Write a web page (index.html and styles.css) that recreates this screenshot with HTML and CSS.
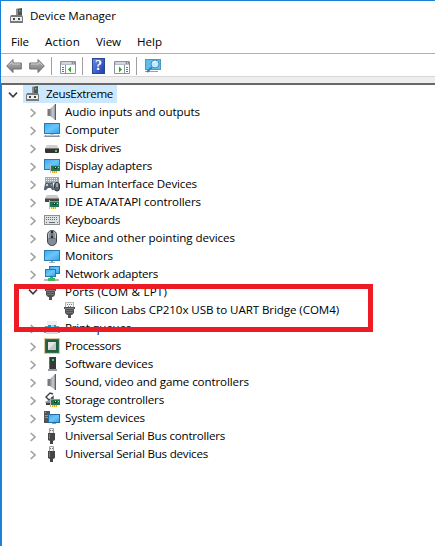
FILE: index.html
```html
<!DOCTYPE html>
<html lang="en">
<head>
<meta charset="utf-8">
<title>Device Manager</title>
<link rel="stylesheet" href="styles.css">
</head>
<body>
<svg class="defs" aria-hidden="true">
  <defs>
    <linearGradient id="blue" x1="0" y1="0" x2="1" y2="1"><stop offset="0" stop-color="#3eacf0"/><stop offset=".5" stop-color="#6cc5fb"/><stop offset="1" stop-color="#32a5ee"/></linearGradient>
    <linearGradient id="metal" x1="0" y1="0" x2="1" y2="0"><stop offset="0" stop-color="#8b8d90"/><stop offset=".5" stop-color="#c9ccd0"/><stop offset="1" stop-color="#74777b"/></linearGradient>
    <linearGradient id="arrow" x1="0" y1="0" x2="0" y2="1"><stop offset="0" stop-color="#b7b7b7"/><stop offset="1" stop-color="#777"/></linearGradient>
    <symbol id="closed" viewBox="0 0 8 10"><path d="M1.7 1 6 5 1.7 9" fill="none" stroke="#a3a3a3" stroke-width="1.7"/></symbol>
    <symbol id="open" viewBox="0 0 10 8"><path d="M1 1.7 5 5.8 9 1.7" fill="none" stroke="#404040" stroke-width="1.7"/></symbol>
    <symbol id="root" viewBox="0 0 16 16"><path d="M7 1 13 0v8H7z" fill="#505255"/><path d="M7 1 9 .6V8H7z" fill="#8d8f92"/><path d="M10 2h1.4v1.5H10z" fill="#28ef42"/><path d="M2 7h11l1 2v6H1V9z" fill="#77797c"/><path d="M2 9h11v4H2z" fill="#eee"/><path d="M4 10h2v2H4zm5 0h2v2H9z" fill="#444"/></symbol>
    <symbol id="speaker" viewBox="0 0 16 16"><path d="M3 5h3v7H3z" fill="#727981"/><path d="M3 5h1v7H3z" fill="#b6bcc2"/><path d="M6 5 11 0h1v16h-1l-5-4z" fill="url(#metal)"/><path d="M11 0h1v16h-1z" fill="#5a6068"/></symbol>
    <symbol id="computer" viewBox="0 0 16 16"><path d="M0 1h16v11H0z" fill="#287aaf"/><path d="M1 2h14v9H1z" fill="url(#blue)"/><path d="M6 12h4v1H6z" fill="#c4cbd0"/><path d="M1 13h14l1 2H0z" fill="#83939e"/><path d="M2 13h12v1H2z" fill="#bac7cf"/></symbol>
    <symbol id="monitor" viewBox="0 0 16 16"><path d="M0 2h16v11H0z" fill="#287aaf"/><path d="M1 3h14v9H1z" fill="url(#blue)"/><path d="M7 13h2v1H7z" fill="#8c9ba5"/><path d="M5 14h6v1H5z" fill="#a4afb6"/></symbol>
    <symbol id="disk" viewBox="0 0 16 16"><path d="M3 5h10l2 4H1z" fill="#cfd0d1"/><path d="M1 8h14v4q0 1-1 1H2q-1 0-1-1z" fill="#343434"/><path d="M1 8h14v1H1z" fill="#777"/><path d="M11 10h2v2h-2z" fill="#35e14c"/></symbol>
    <symbol id="card" viewBox="0 0 10 9"><path d="M0 0h1v9H0z" fill="#b7babd"/><path d="M1 1h9v6H1z" fill="#207652"/><path d="M1 1h9v1H1z" fill="#68a98a"/><path d="M4 3h3v2H4z" fill="#15432f"/><path d="M5 3h1v1H5zM8 3h1v1H8z" fill="#b8dfc7"/><path d="M2 7h5v2H2z" fill="#f4a800"/><path d="M3 7h1v2H3zm2 0h1v2H5z" fill="#ffd85b"/></symbol>
    <symbol id="display" viewBox="0 0 16 16"><path d="M0 1h16v11H0z" fill="#287aaf"/><path d="M1 2h14v9H1z" fill="url(#blue)"/><use href="#card" x="6" y="6" width="10" height="9"/></symbol>
    <symbol id="keyboard" viewBox="0 0 16 16"><path d="M0 3h16v10H0z" fill="#8a9095"/><path d="M1 4h14v8H1z" fill="#dfe2e4"/><path d="M2 5.5h12M2 7.5h12" stroke="#666b70" stroke-dasharray="1 1"/><path d="M2 10h1v1H2zm3 0h6v1H5zm8 0h1v1h-1z" fill="#666b70"/></symbol>
    <symbol id="hid" viewBox="0 0 16 16"><path d="M1 1h14v6H1z" fill="#a4a9ad"/><path d="M2 2.5h12M2 4.5h12" stroke="#f2f3f4" stroke-dasharray="1 1"/><path d="M1 8q1-3 3-1h2q3-2 3 1l1 5q0 2-2 1L7 12H4l-2 2q-2 1-2-1z" fill="#53626e"/><path d="M2 9h2M3 8v2" stroke="#e9edf0"/><circle cx="7.5" cy="9" r="1" fill="#5cacdf"/><rect x="10.5" y="6.5" width="5" height="8.5" rx="2.5" fill="#59616b" stroke="#30363d"/><path d="M13 7v4" stroke="#dce0e4"/></symbol>
    <symbol id="ide" viewBox="0 0 16 16"><path d="M3 1h10l2 3H1z" fill="#cacbcc"/><path d="M1 4h14v4H1z" fill="#474747"/><path d="M1 4h14v1H1z" fill="#888"/><use href="#card" x="5" y="6" width="10" height="9"/></symbol>
    <symbol id="mouse" viewBox="0 0 16 16"><rect x="3.5" y=".5" width="9" height="15" rx="4.3" fill="#858c95" stroke="#3e434a"/><path d="M6 1.5Q4 3 4.5 8M10 1.5Q12 3 11.5 8" stroke="#bcc1c6" fill="none"/><path d="M7 1h2v7H7z" fill="#25282d"/><path d="M7.5 3h1v3h-1z" fill="#a5b2be"/><path d="M5 8.5h6" stroke="#686e76"/></symbol>
    <symbol id="network" viewBox="0 0 16 16"><path d="M5 0h11v8H5z" fill="#257bae"/><path d="M6 1h9v6H6z" fill="url(#blue)"/><path d="M1 3h11v8H1z" fill="#257bae"/><path d="M2 4h9v6H2z" fill="url(#blue)"/><path d="M6 11h3v2H6z" fill="#58a766"/><path d="M0 13h15v2H0z" fill="#b6b9bb"/><path d="M4 12h7v3H4z" fill="#3eb95c"/></symbol>
    <symbol id="port" viewBox="0 0 16 16"><path d="M3.5.5h8v5h-8z" fill="#f2f2f2" stroke="#b5b6b8"/><path d="M5 2h1v1H5zm2 0h1v1H7zm2 0h1v1H9zM6 4h1v1H6zm2 0h1v1H8z" fill="#808386"/><path d="M2 5h11v2h-1v4l-2 2H9v3H6v-3H5l-2-2V7H2z" fill="#505255"/><path d="M3 6h9v1H3z" fill="#7c7e80"/><path d="M4 8.5h7M4 10.5h7" stroke="#707274"/></symbol>
    <symbol id="printer" viewBox="0 0 16 16"><path d="M1 6h14l1 3v4H0V9z" fill="#8d9399"/><path d="M3 1h10v4H3z" fill="#eee"/><path d="M4 5h8v4H4z" fill="#1597dd"/><path d="M7 5h3v2H7z" fill="#87e9a3"/><path d="M2 9h12v5H2z" fill="#d6d8da"/></symbol>
    <symbol id="processor" viewBox="0 0 16 16"><path d="M.5.5h15v15H.5z" fill="none" stroke="#b69743" stroke-dasharray="1 1"/><path d="M1 1h14v14H1z" fill="#34704f"/><path d="M2 2h12v12H2z" fill="#245f43"/><path d="M4 4h8v8H4z" fill="#c4c8c5"/><path d="M4 4h8L4 12z" fill="#e4e5e4"/></symbol>
    <symbol id="software" viewBox="0 0 16 16"><path d="M5 1h7v12H5z" fill="#373839"/><path d="M5 1h1v12H5z" fill="#696b6d"/><path d="M8 3h2v2H8z" fill="#22ed3b"/><path d="M4 13h9v2H4z" fill="#9a9c9e"/></symbol>
    <symbol id="storage" viewBox="0 0 16 16"><path d="M9 2 6 1 2 5l3 3 4-3v3L7 7" fill="none" stroke="#3f4447" stroke-width="1.4"/><path d="M1 10 5 8h4v5H3z" fill="#8e9295"/><path d="M2 11h5v2H2z" fill="#3b4043"/><use href="#card" x="6" y="6" width="10" height="9"/></symbol>
    <symbol id="system" viewBox="0 0 16 16"><path d="M0 1h6v12H0z" fill="#505559"/><path d="M1 2h1v1H1z" fill="#36ef50"/><path d="M1 5h4v1H1zm0 2h4v1H1z" fill="#8e959b"/><path d="M4 4h12v9H4z" fill="#246d9e"/><path d="M5 5h10v7H5z" fill="url(#blue)"/><path d="M8 13h4v1H8z" fill="#929ca3"/></symbol>
    <symbol id="usb" viewBox="0 0 16 16"><path d="M5.5.5h4v5h-4z" fill="#eee" stroke="#a1a3a5"/><path d="M6 2h1v1H6zm2 0h1v1H8z" fill="#777"/><path d="M4 5h7v7l-2 1v3H6v-3l-2-1z" fill="#434547"/><path d="M5 6h1v5H5z" fill="#7a7c7e"/></symbol>
    <symbol id="back" viewBox="0 0 16 16"><path d="M.7 8 7 1.5V5h8.3v6H7v3.5z" fill="url(#arrow)" stroke="#707070"/><path d="M2.5 7.6 6 4v2h8" fill="none" stroke="#ccc"/></symbol>
    <symbol id="scan" viewBox="0 0 16 16"><path d="M0 1h16v11H0z" fill="#4c99bd"/><path d="M1 2h14v9H1z" fill="#5dbdec"/><path d="M0 13h13v1H0z" fill="#91a3ae"/><path d="m7 9-5 5" stroke="#3e7fb1" stroke-width="2"/><circle cx="10" cy="6" r="4" fill="#bfe9ff" stroke="#4b8eb4"/><path d="M8 5q1-2 3-1" fill="none" stroke="#fff"/></symbol>
    <symbol id="pane" viewBox="0 0 16 13"><path d="M.5.5h15v12H.5z" fill="#fff" stroke="#8b949c"/><path d="M1 1h14v3H1z" fill="#b7bfc6"/><path d="M2 2h9" stroke="#e9edf0"/><path d="M12 2h1m1 0h1" stroke="#555d65"/><path d="M5.5 4v8" stroke="#8b949c"/><path d="M2 6.5h2m-2 2h2m-2 2h2" stroke="#53779a"/></symbol>
  </defs>
</svg>
<div class="window">
  <header class="titlebar"><svg class="icon"><use href="#root"/></svg><span class="label" data-width="86">Device Manager</span></header>
  <nav class="menu"><span class="label" data-width="18">File</span><span class="label" data-width="35">Action</span><span class="label" data-width="25">View</span><span class="label" data-width="25">Help</span></nav>
  <div class="toolbar">
    <svg class="icon"><use href="#back"/></svg>
    <svg class="icon forward"><use href="#back"/></svg>
    <i class="separator"></i>
    <svg class="icon pane" viewBox="0 0 16 13"><use href="#pane"/><path d="m11 5.5-3 3 3 3z" fill="#25a925"/></svg>
    <i class="separator"></i>
    <span class="help">?</span>
    <svg class="icon pane console" viewBox="0 0 16 13"><path d="M.5.5h15v12H.5z" fill="#fff" stroke="#8b949c"/><path d="M1 1h14v3H1z" fill="#b7bfc6"/><path d="M2 2h9" stroke="#e9edf0"/><path d="M12 2h1m1 0h1" stroke="#555d65"/><path d="M10.5 4v8" stroke="#8b949c"/><path d="M12 6.5h2m-2 2h2m-2 2h2" stroke="#53779a"/><path d="m5 5.5 3 3-3 3z" fill="#25a925"/></svg>
    <i class="separator"></i>
    <svg class="icon scan"><use href="#scan"/></svg>
  </div>
  <main class="tree">
    <div class="row top"><svg class="open"><use href="#open"/></svg><div class="selected"><svg class="icon"><use href="#root"/></svg><span class="label" data-width="67">ZeusExtreme</span></div></div>
    <div class="row"><svg class="closed"><use href="#closed"/></svg><svg class="icon"><use href="#speaker"/></svg><span class="label" data-width="135">Audio inputs and outputs</span></div>
    <div class="row"><svg class="closed"><use href="#closed"/></svg><svg class="icon"><use href="#computer"/></svg><span class="label" data-width="54">Computer</span></div>
    <div class="row"><svg class="closed"><use href="#closed"/></svg><svg class="icon"><use href="#disk"/></svg><span class="label" data-width="56">Disk drives</span></div>
    <div class="row"><svg class="closed"><use href="#closed"/></svg><svg class="icon"><use href="#display"/></svg><span class="label" data-width="87">Display adapters</span></div>
    <div class="row"><svg class="closed"><use href="#closed"/></svg><svg class="icon"><use href="#hid"/></svg><span class="label" data-width="132">Human Interface Devices</span></div>
    <div class="row"><svg class="closed"><use href="#closed"/></svg><svg class="icon"><use href="#ide"/></svg><span class="label" data-width="136">IDE ATA/ATAPI controllers</span></div>
    <div class="row"><svg class="closed"><use href="#closed"/></svg><svg class="icon"><use href="#keyboard"/></svg><span class="label" data-width="55">Keyboards</span></div>
    <div class="row"><svg class="closed"><use href="#closed"/></svg><svg class="icon"><use href="#mouse"/></svg><span class="label" data-width="170">Mice and other pointing devices</span></div>
    <div class="row"><svg class="closed"><use href="#closed"/></svg><svg class="icon"><use href="#monitor"/></svg><span class="label" data-width="48">Monitors</span></div>
    <div class="row"><svg class="closed"><use href="#closed"/></svg><svg class="icon"><use href="#network"/></svg><span class="label" data-width="93">Network adapters</span></div>
    <div class="row"><svg class="open"><use href="#open"/></svg><svg class="icon port"><use href="#port"/></svg><span class="label" data-width="102">Ports (COM &amp; LPT)</span></div>
    <div class="row child"><svg class="icon"><use href="#port"/></svg><span class="label" data-width="255">Silicon Labs CP210x USB to UART Bridge (COM4)</span></div>
    <div class="row"><svg class="closed"><use href="#closed"/></svg><svg class="icon"><use href="#printer"/></svg><span class="label" data-width="66">Print queues</span></div>
    <div class="row"><svg class="closed"><use href="#closed"/></svg><svg class="icon"><use href="#processor"/></svg><span class="label" data-width="56">Processors</span></div>
    <div class="row"><svg class="closed"><use href="#closed"/></svg><svg class="icon"><use href="#software"/></svg><span class="label" data-width="88">Software devices</span></div>
    <div class="row"><svg class="closed"><use href="#closed"/></svg><svg class="icon"><use href="#speaker"/></svg><span class="label" data-width="184">Sound, video and game controllers</span></div>
    <div class="row"><svg class="closed"><use href="#closed"/></svg><svg class="icon"><use href="#storage"/></svg><span class="label" data-width="99">Storage controllers</span></div>
    <div class="row"><svg class="closed"><use href="#closed"/></svg><svg class="icon"><use href="#system"/></svg><span class="label" data-width="80">System devices</span></div>
    <div class="row"><svg class="closed"><use href="#closed"/></svg><svg class="icon"><use href="#usb"/></svg><span class="label" data-width="160">Universal Serial Bus controllers</span></div>
    <div class="row"><svg class="closed"><use href="#closed"/></svg><svg class="icon"><use href="#usb"/></svg><span class="label" data-width="143">Universal Serial Bus devices</span></div>
    <div class="callout"></div>
  </main>
</div>
<script src="labels.js"></script>
</body>
</html>
```
FILE: styles.css
```css
* { box-sizing: border-box; }
body { margin: 0; background: #fff; color: #000; font: 11.6px/18px "Open Sans", "Noto Sans", sans-serif; }
.defs { position: absolute; width: 0; height: 0; }
.window { width: 435px; height: 546px; border-top: 1px solid #1a80d5; border-left: 1px solid #1a80d5; overflow: hidden; display: flex; flex-direction: column; }
.label { white-space: nowrap; flex: none; }
.icon { width: 16px; height: 16px; flex: none; display: block; }
.titlebar { height: 30px; display: flex; align-items: center; gap: 5px; padding: 0 0 0 8px; flex: none; }
.menu { height: 23px; display: flex; align-items: center; gap: 16px; padding: 0 0 0 10px; border-bottom: 1px solid #adafb9; flex: none; }
.toolbar { position: relative; z-index: 1; height: 23px; display: flex; align-items: center; padding: 2px 0 0 5px; border-bottom: 1px solid #d7d7d7; flex: none; }
.forward { transform: scaleX(-1); margin-left: 7px; }
.separator { width: 1px; height: 18px; background: #a0a0a0; margin: 0 8px 0 6px; }
.pane { height: 13px; margin-top: 2px; }
.pane + .separator { margin: 0 9px 0 6px; }
.help { width: 13px; height: 16px; background: linear-gradient(120deg, #6489e4, #1f3fae); border: 1px solid #294690; color: #fff; font: bold 14px/14px "Liberation Serif", serif; text-align: center; }
.console { margin-left: 9px; }
.scan { margin-left: -1px; }
.tree { position: relative; flex: 1; border-left: 1px solid #706f75; border-top: 2px solid #68686b; margin-top: 6px; padding-left: 27px; box-shadow: 0 -7px 0 #eee; }
.row { height: 18px; display: flex; align-items: center; }
.row .icon { margin-right: 5px; }
.closed { width: 8px; height: 10px; margin: 1px 7px 0 0; flex: none; }
.open { width: 10px; height: 8px; margin: 0 5px 0 -1px; flex: none; }
.row .port { margin-right: 6px; }
.top { margin-left: -21px; }
.top .open { margin: 1px 5px 0 0; }
.selected { height: 18px; width: 94px; background: #cce8ff; display: flex; align-items: center; padding-left: 2px; }
.child { padding-left: 34px; }
.row.child .icon { margin: 0 6px 0 -1px; }
.callout { position: absolute; left: 12px; top: 199px; width: 359px; height: 48px; border: 5px solid #ed1c24; }
```
FILE: labels.js
```js
document.querySelectorAll(".label").forEach(function (el) {
  var natural = el.getBoundingClientRect().width;
  el.style.letterSpacing = (el.dataset.width - natural) / el.textContent.length + "px";
});
```
